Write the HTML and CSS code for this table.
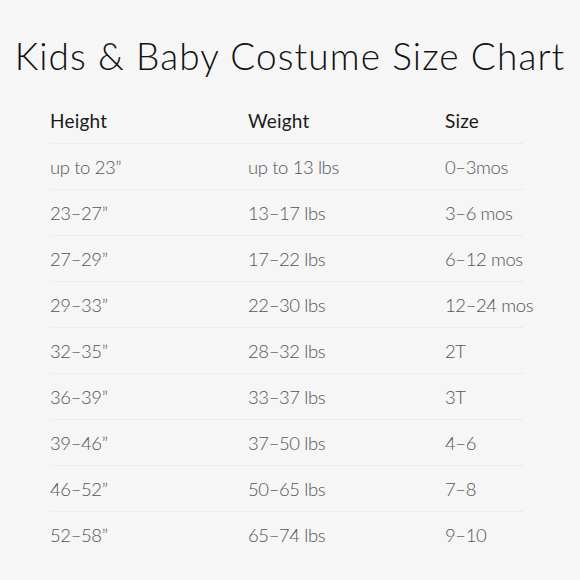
FILE: index.html
```html
<!DOCTYPE html>
<html>
<head>
<meta charset="utf-8">
<link rel="stylesheet" href="styles.css">
</head>
<body>
<div class="page">
  <h1 class="title">Kids &amp; Baby Costume Size Chart</h1>
  <div class="table">
    <div class="row head"><span>Height</span><span>Weight</span><span>Size</span></div>
    <div class="row"><span>up to 23”</span><span>up to 13 lbs</span><span>0–3mos</span></div>
    <div class="row"><span>23–27”</span><span>13–17 lbs</span><span>3–6 mos</span></div>
    <div class="row"><span>27–29”</span><span>17–22 lbs</span><span>6–12 mos</span></div>
    <div class="row"><span>29–33”</span><span>22–30 lbs</span><span>12–24 mos</span></div>
    <div class="row"><span>32–35”</span><span>28–32 lbs</span><span>2T</span></div>
    <div class="row"><span>36–39”</span><span>33–37 lbs</span><span>3T</span></div>
    <div class="row"><span>39–46”</span><span>37–50 lbs</span><span>4–6</span></div>
    <div class="row"><span>46–52”</span><span>50–65 lbs</span><span>7–8</span></div>
    <div class="row last"><span>52–58”</span><span>65–74 lbs</span><span>9–10</span></div>
  </div>
</div>
</body>
</html>
```
FILE: styles.css
```css
html, body { margin: 0; padding: 0; }
body {
  background: #f6f6f6;
  width: 580px;
  height: 580px;
  overflow: hidden;
  font-family: Lato, "Noto Sans", sans-serif;
}
.page { padding-top: 33px; }
.title {
  margin: 0;
  text-align: center;
  font-weight: 300;
  font-size: 37px;
  line-height: 46px;
  color: #111;
  letter-spacing: 1.1px;
  white-space: nowrap;
}
.table {
  margin: 19px 57px 0 50px;
}
.row {
  display: grid;
  grid-template-columns: 198px 197px 1fr;
  height: 45px;
  align-items: center;
  border-bottom: 1px dotted #e4e4e4;
  font-size: 18.5px;
  font-weight: 300;
  color: #555;
  white-space: nowrap;
  letter-spacing: -0.4px;
}
.row.head { color: #1a1a1a; font-weight: 400; font-size: 19px; letter-spacing: 0.2px; }
.row.last { border-bottom: none; }
```
